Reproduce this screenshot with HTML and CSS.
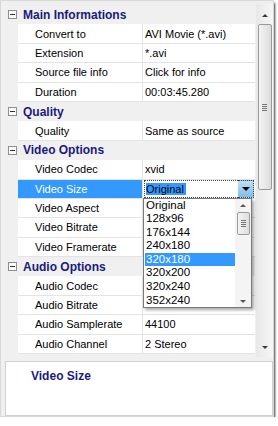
FILE: index.html
```html
<!DOCTYPE html>
<html lang="en">
<head>
  <meta charset="UTF-8" />
  <title>Conversion Options</title>
  <link rel="stylesheet" href="styles.css">
</head>
<body>
  <div class="window">
    <div class="grid-wrap">
      <div class="grid">
        <div class="cat"><span class="toggle"></span>Main Informations</div>
        <div class="row"><div class="name">Convert to</div><div class="value">AVI Movie (*.avi)</div></div>
        <div class="row"><div class="name">Extension</div><div class="value">*.avi</div></div>
        <div class="row"><div class="name">Source file info</div><div class="value">Click for info</div></div>
        <div class="row"><div class="name">Duration</div><div class="value">00:03:45.280</div></div>

        <div class="cat"><span class="toggle"></span>Quality</div>
        <div class="row"><div class="name">Quality</div><div class="value">Same as source</div></div>

        <div class="cat"><span class="toggle"></span>Video Options</div>
        <div class="row"><div class="name">Video Codec</div><div class="value">xvid</div></div>
        <div class="row selected">
          <div class="name">Video Size</div>
          <div class="value combo">
            <span class="combo-text">Original</span>
            <span class="combo-btn"><span class="arrow-down"></span></span>
            <div class="dropdown">
              <ul class="options">
                <li>Original</li>
                <li>128x96</li>
                <li>176x144</li>
                <li>240x180</li>
                <li class="active">320x180</li>
                <li>320x200</li>
                <li>320x240</li>
                <li>352x240</li>
              </ul>
              <div class="mini-scroll">
                <span class="arrow-up small"></span>
                <span class="mini-thumb"><span class="grip"></span></span>
                <span class="arrow-down small"></span>
              </div>
            </div>
          </div>
        </div>
        <div class="row"><div class="name">Video Aspect</div><div class="value"></div></div>
        <div class="row"><div class="name">Video Bitrate</div><div class="value"></div></div>
        <div class="row"><div class="name">Video Framerate</div><div class="value"></div></div>

        <div class="cat"><span class="toggle"></span>Audio Options</div>
        <div class="row"><div class="name">Audio Codec</div><div class="value"></div></div>
        <div class="row"><div class="name">Audio Bitrate</div><div class="value"></div></div>
        <div class="row"><div class="name">Audio Samplerate</div><div class="value">44100</div></div>
        <div class="row"><div class="name">Audio Channel</div><div class="value">2 Stereo</div></div>
      </div>

      <div class="vscroll">
        <span class="arrow-up"></span>
        <span class="thumb"><span class="grip"></span></span>
        <span class="track"></span>
        <span class="arrow-down"></span>
      </div>
    </div>

    <div class="desc">
      <div class="desc-title">Video Size</div>
    </div>
  </div>
</body>
</html>
```

FILE: styles.css
```css
body {
  margin: 0;
  background-color: #ffffff;
  font-family: 'Liberation Sans', Arial, sans-serif;
  font-size: 11px;
  color: #000000;
}
.window {
  width: 274px;
  height: 417px;
  background-color: #f0f0f0;
  border: 1px solid #d8d8d8;
  box-shadow: 1px 3px 2px rgba(0, 0, 0, 0.75);
  padding: 3px 0 0 3px;
  box-sizing: border-box;
  display: flex;
  flex-direction: column;
}
.grid-wrap {
  display: flex;
  height: 354px;
}
.grid {
  width: 252px;
  padding-top: 1px;
}
.cat {
  height: 19.4px;
  display: flex;
  align-items: center;
  font-size: 12px;
  font-weight: bold;
  color: #1a1a7e;
  box-sizing: border-box;
}
.toggle {
  width: 7px;
  height: 7px;
  border: 1px solid #8e8f8f;
  background-color: #fbfbfb;
  margin: 0 6px 0 4px;
  position: relative;
  flex-shrink: 0;
}
.toggle::after {
  content: '';
  position: absolute;
  left: 1px;
  top: 3px;
  width: 5px;
  height: 1px;
  background-color: #333333;
}
.row {
  height: 19.4px;
  display: flex;
  padding-left: 14px;
  box-sizing: border-box;
}
.name, .value {
  background-color: #ffffff;
  border-bottom: 1px solid #e3e3e3;
  display: flex;
  align-items: center;
  box-sizing: border-box;
  white-space: nowrap;
}
.name {
  width: 125px;
  padding-left: 17px;
  border-right: 1px solid #e3e3e3;
}
.value {
  flex: 1;
  padding-left: 2px;
}
.selected .name {
  background-color: #3399ff;
  color: #ffffff;
}
.combo {
  position: relative;
  padding: 0;
}
.combo-text {
  display: flex;
  align-items: center;
  height: 16px;
  flex: 1;
  margin-left: 1px;
  border: 1px dotted #444444;
  border-right: none;
  padding-left: 1px;
  background: linear-gradient(#3399ff, #3399ff) no-repeat 1px 2px / 40px 12px;
}
.combo-btn {
  width: 15px;
  height: 16px;
  border: 1px dotted #444444;
  border-left: none;
  margin-right: 1px;
  background: linear-gradient(#bfe0f6, #7fbde9);
  display: flex;
  align-items: center;
  justify-content: center;
}
.arrow-down {
  width: 0;
  height: 0;
  border-left: 4px solid transparent;
  border-right: 4px solid transparent;
  border-top: 4px solid #000000;
}
.arrow-up {
  width: 0;
  height: 0;
  border-left: 4px solid transparent;
  border-right: 4px solid transparent;
  border-bottom: 4px solid #2b2b2b;
}
.arrow-up.small, .arrow-down.small {
  border-left-width: 3px;
  border-right-width: 3px;
  border-color: transparent;
}
.arrow-up.small {
  border-bottom: 3px solid #555555;
}
.arrow-down.small {
  border-top: 3px solid #555555;
}
.dropdown {
  position: absolute;
  top: 18px;
  left: 0;
  width: 109px;
  height: 110px;
  background-color: #ffffff;
  border: 1px solid #7a7a7a;
  box-shadow: 2px 2px 3px rgba(0, 0, 0, 0.35);
  display: flex;
  box-sizing: border-box;
  z-index: 2;
}
.options {
  list-style: none;
  margin: 0;
  padding: 0 0 0 1px;
  flex: 1;
  color: #000000;
}
.options li {
  height: 13.6px;
  line-height: 13.6px;
  padding-left: 1px;
  font-size: 11.5px;
}
.options li.active {
  background-color: #3399ff;
  color: #ffffff;
}
.mini-scroll {
  width: 16px;
  background-color: #f4f4f4;
  display: flex;
  flex-direction: column;
  align-items: center;
  padding: 5px 0 4px;
  box-sizing: border-box;
}
.mini-thumb {
  width: 13px;
  height: 23px;
  margin: 5px 0 auto;
  border: 1px solid #9c9c9c;
  border-radius: 2px;
  background: linear-gradient(90deg, #f3f3f3, #dedede);
  box-sizing: border-box;
  display: flex;
  align-items: center;
  justify-content: center;
}
.grip {
  width: 5px;
  height: 7px;
  background: repeating-linear-gradient(#777777 0 1px, transparent 1px 2px);
}
.vscroll {
  width: 17px;
  margin-left: 1px;
  background: linear-gradient(90deg, #e8e8e8, #f6f6f6);
  display: flex;
  flex-direction: column;
  align-items: center;
  padding: 10px 0 8px;
  box-sizing: border-box;
}
.vscroll .arrow-up {
  border-left-width: 3px;
  border-right-width: 3px;
  border-bottom: 3px solid #3a3a3a;
}
.vscroll .arrow-down {
  border-left-width: 3px;
  border-right-width: 3px;
  border-top: 3px solid #3a3a3a;
}
.thumb {
  width: 14px;
  height: 166px;
  margin-top: 7px;
  border: 1px solid #9a9a9a;
  border-radius: 2px;
  background: linear-gradient(90deg, #f4f4f4, #dcdcdc);
  box-sizing: border-box;
  display: flex;
  align-items: center;
  justify-content: center;
}
.track {
  flex: 1;
}
.desc {
  margin: 4px 0 0 1px;
  height: 55px;
  background-color: #ffffff;
  border: 1px solid #d0d0d0;
  box-sizing: border-box;
}
.desc-title {
  font-size: 12px;
  font-weight: bold;
  color: #1a1a7e;
  padding: 7px 0 0 25px;
}
```
